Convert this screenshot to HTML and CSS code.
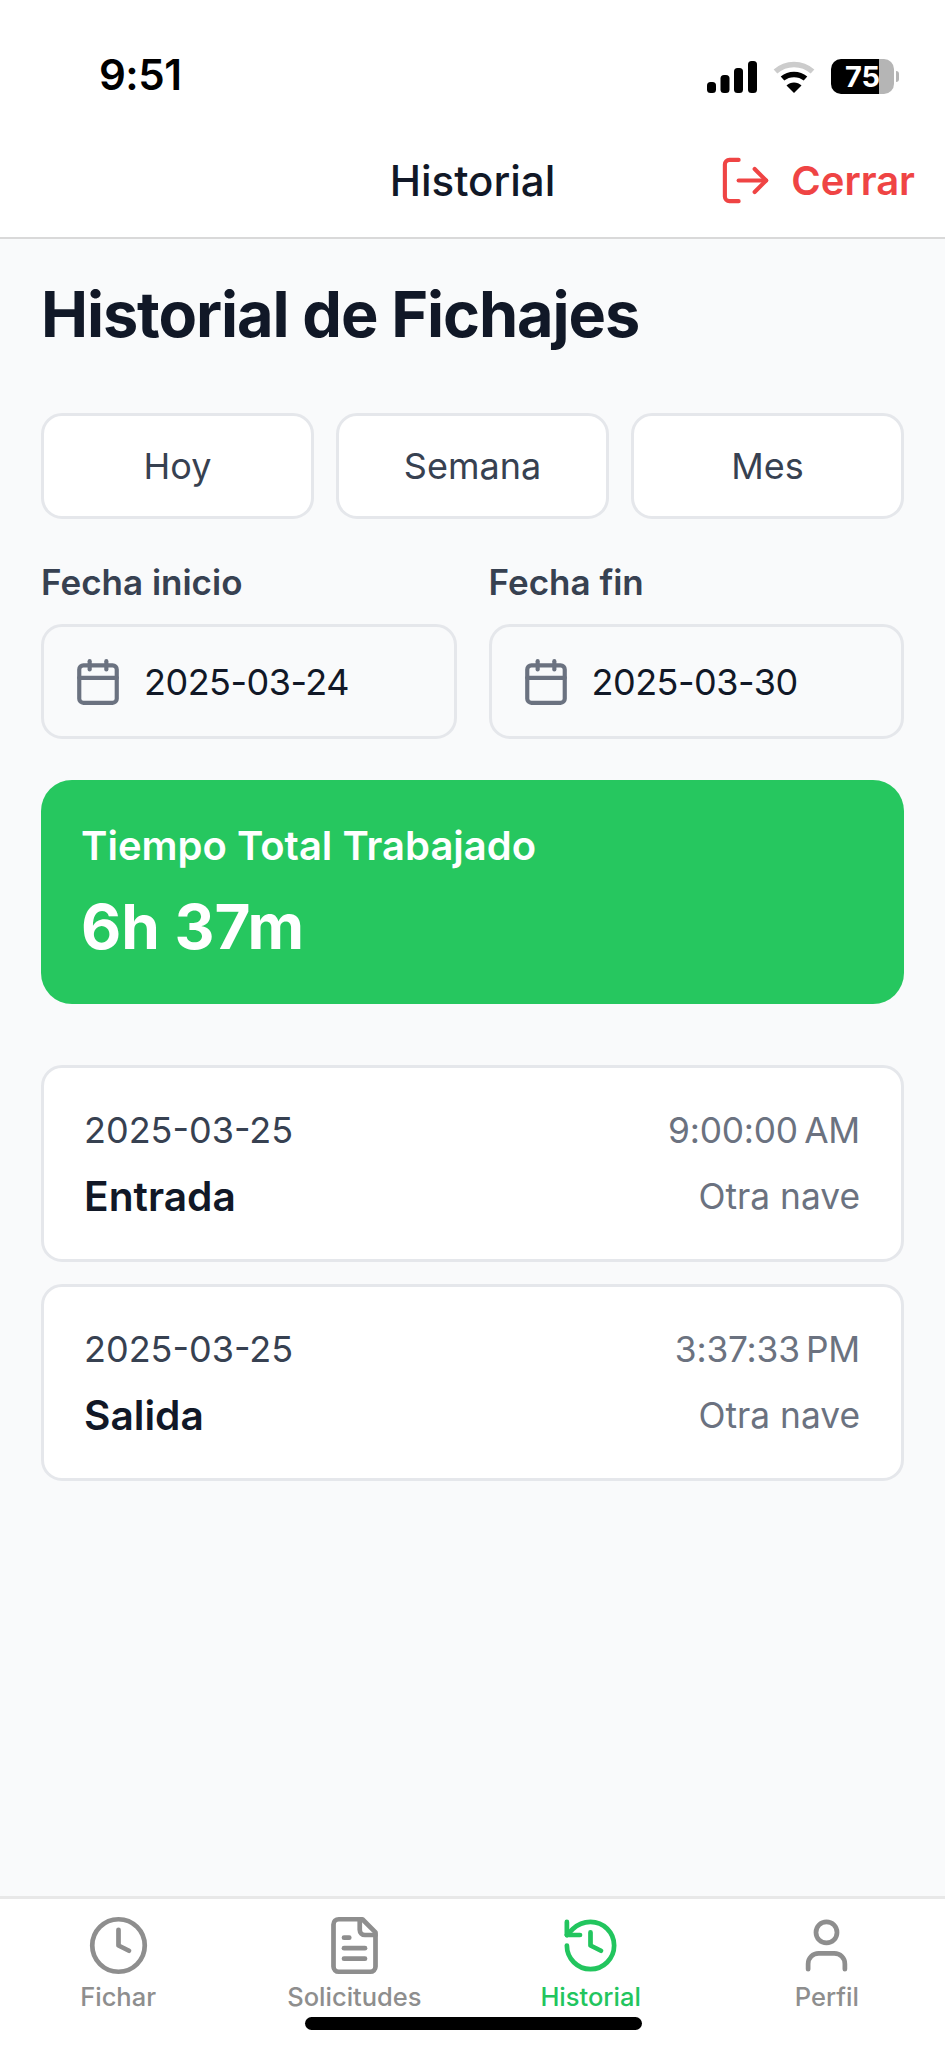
FILE: index.html
```html
<!DOCTYPE html>
<html lang="es">
<head>
  <meta charset="UTF-8" />
  <title>Historial</title>
  <link rel="stylesheet" href="styles.css">
</head>
<body>
  <div class="app">
    <div class="status-bar">
      <span class="status-time">9:51</span>
      <div class="status-icons">
        <svg class="signal" width="50" height="32" viewBox="0 0 50 32">
          <rect x="0" y="21" width="9" height="11" rx="3.5" />
          <rect x="13.5" y="14" width="9" height="18" rx="3.5" />
          <rect x="27" y="7" width="9" height="25" rx="3.5" />
          <rect x="41" y="0" width="9" height="32" rx="3.5" />
        </svg>
        <svg class="wifi" width="42" height="32" viewBox="0 0 42 32" fill="none">
          <path d="M2.5 10.5C13 1 29 1 39.500 10.500" stroke="#cccccc" stroke-width="5.500" />
          <path d="M9.500 17.500C16 12 26 12 32.500 17.500" stroke="#000" stroke-width="5.500" />
          <path d="M21 32L13.500 24.500C17.500 20.500 24.500 20.500 28.500 24.500Z" fill="#000" />
        </svg>
        <div class="battery">
          <div class="battery-body">75</div>
          <div class="battery-nub"></div>
        </div>
      </div>
    </div>

    <header class="top-bar">
      <h2 class="top-title">Historial</h2>
      <button class="logout">
        <svg width="55" height="55" viewBox="0 0 24 24" fill="none" stroke="#ef4444" stroke-width="1.800" stroke-linecap="round" stroke-linejoin="round">
          <path d="M9 21H5a2 2 0 0 1-2-2V5a2 2 0 0 1 2-2h4" />
          <polyline points="16 17 21 12 16 7" />
          <line x1="21" y1="12" x2="9" y2="12" />
        </svg>
        <span>Cerrar</span>
      </button>
    </header>

    <main class="content">
      <h1 class="page-title">Historial de Fichajes</h1>

      <div class="quick-filters">
        <button class="filter-btn">Hoy</button>
        <button class="filter-btn">Semana</button>
        <button class="filter-btn">Mes</button>
      </div>

      <div class="date-row">
        <div class="date-field">
          <label class="date-label">Fecha inicio</label>
          <div class="date-input">
            <svg width="50" height="50" viewBox="0 0 24 24" fill="none" stroke="#6b7280" stroke-width="2" stroke-linecap="round" stroke-linejoin="round">
              <path d="M8 2v4" /><path d="M16 2v4" />
              <rect x="3" y="4" width="18" height="18" rx="2" />
              <path d="M3 10h18" />
            </svg>
            <span>2025-03-24</span>
          </div>
        </div>
        <div class="date-field">
          <label class="date-label">Fecha fin</label>
          <div class="date-input">
            <svg width="50" height="50" viewBox="0 0 24 24" fill="none" stroke="#6b7280" stroke-width="2" stroke-linecap="round" stroke-linejoin="round">
              <path d="M8 2v4" /><path d="M16 2v4" />
              <rect x="3" y="4" width="18" height="18" rx="2" />
              <path d="M3 10h18" />
            </svg>
            <span>2025-03-30</span>
          </div>
        </div>
      </div>

      <section class="total-card">
        <div class="total-label">Tiempo Total Trabajado</div>
        <div class="total-value">6h 37m</div>
      </section>

      <ul class="records">
        <li class="record">
          <div class="record-left">
            <span class="record-date">2025-03-25</span>
            <span class="record-type">Entrada</span>
          </div>
          <div class="record-right">
            <span class="record-time">9:00:00&#8239;AM</span>
            <span class="record-place">Otra nave</span>
          </div>
        </li>
        <li class="record">
          <div class="record-left">
            <span class="record-date">2025-03-25</span>
            <span class="record-type">Salida</span>
          </div>
          <div class="record-right">
            <span class="record-time">3:37:33&#8239;PM</span>
            <span class="record-place">Otra nave</span>
          </div>
        </li>
      </ul>
    </main>

    <nav class="tab-bar">
      <a class="tab">
        <svg width="63" height="63" viewBox="0 0 24 24" fill="none" stroke="currentColor" stroke-width="1.800" stroke-linecap="round" stroke-linejoin="round">
          <circle cx="12" cy="12" r="10" />
          <polyline points="12 6 12 12 16 14" />
        </svg>
        <span>Fichar</span>
      </a>
      <a class="tab">
        <svg width="63" height="63" viewBox="0 0 24 24" fill="none" stroke="currentColor" stroke-width="1.800" stroke-linecap="round" stroke-linejoin="round">
          <path d="M15 2H6a2 2 0 0 0-2 2v16a2 2 0 0 0 2 2h12a2 2 0 0 0 2-2V7Z" />
          <path d="M14 2v4a2 2 0 0 0 2 2h4" />
          <path d="M10 9H8" /><path d="M16 13H8" /><path d="M16 17H8" />
        </svg>
        <span>Solicitudes</span>
      </a>
      <a class="tab active">
        <svg width="63" height="63" viewBox="0 0 24 24" fill="none" stroke="currentColor" stroke-width="1.800" stroke-linecap="round" stroke-linejoin="round">
          <path d="M3 12a9 9 0 1 0 9-9 9.75 9.75 0 0 0-6.74 2.74L3 8" />
          <path d="M3 3v5h5" />
          <path d="M12 7v5l4 2" />
        </svg>
        <span>Historial</span>
      </a>
      <a class="tab">
        <svg width="63" height="63" viewBox="0 0 24 24" fill="none" stroke="currentColor" stroke-width="1.800" stroke-linecap="round" stroke-linejoin="round">
          <path d="M19 21v-2a4 4 0 0 0-4-4H9a4 4 0 0 0-4 4v2" />
          <circle cx="12" cy="7" r="4" />
        </svg>
        <span>Perfil</span>
      </a>
      <div class="home-indicator"></div>
    </nav>
  </div>
</body>
</html>
```

FILE: styles.css
```css
* {
  box-sizing: border-box;
}

body {
  margin: 0;
  background: #fff;
  font-family: Inter, 'Noto Sans', sans-serif;
}

.app {
  width: 945px;
  height: 2048px;
  display: flex;
  flex-direction: column;
  overflow: hidden;
  background: #f9fafb;
}

/* status bar */
.status-bar {
  height: 110px;
  flex: none;
  background: #fff;
  display: flex;
  justify-content: space-between;
  align-items: flex-start;
  padding: 51px 46px 0 99px;
}

.status-time {
  font-size: 42px;
  font-weight: 600;
  line-height: 48px;
  letter-spacing: -0.5px;
  color: #000;
}

.status-icons {
  display: flex;
  align-items: center;
  gap: 16px;
  padding-top: 8px;
}

.battery {
  display: flex;
  align-items: center;
  gap: 2px;
}

.battery-body {
  width: 63px;
  height: 35px;
  border-radius: 10px;
  background: linear-gradient(90deg, #000 76%, #b5b5b5 76%);
  color: #fff;
  font-size: 29px;
  font-weight: 700;
  line-height: 35px;
  text-align: center;
}

.battery-nub {
  width: 3px;
  height: 11px;
  border-radius: 0 3px 3px 0;
  background: #b5b5b5;
}

/* top bar */
.top-bar {
  height: 129px;
  flex: none;
  background: #fff;
  border-bottom: 2px solid #d9d9d9;
  display: grid;
  grid-template-columns: 1fr auto 1fr;
  align-items: center;
  padding: 14px 30px 0;
}

.top-title {
  grid-column: 2;
  margin: 0;
  font-size: 42px;
  font-weight: 500;
  color: #111827;
}

.logout {
  justify-self: end;
  display: flex;
  align-items: center;
  gap: 18px;
  padding: 0;
  border: none;
  background: none;
  color: #ef4444;
  font-family: inherit;
  font-size: 40px;
  font-weight: 600;
}

/* content */
.content {
  flex: 1;
  padding: 36px 41px 0;
}

.page-title {
  margin: 0;
  font-size: 63px;
  font-weight: 700;
  line-height: 79px;
  letter-spacing: -1.100px;
  color: #111827;
}

.quick-filters {
  display: flex;
  gap: 22px;
  margin-top: 59px;
}

.filter-btn {
  flex: 1;
  height: 106px;
  background: #fff;
  border: 3px solid #e5e7eb;
  border-radius: 21px;
  color: #374151;
  font-family: inherit;
  font-size: 36px;
}

.date-row {
  display: flex;
  gap: 32px;
  margin-top: 43px;
}

.date-field {
  flex: 1;
}

.date-label {
  display: block;
  font-size: 35px;
  font-weight: 600;
  line-height: 40px;
  color: #374151;
  margin-bottom: 22px;
}

.date-input {
  height: 115px;
  border: 3px solid #e5e7eb;
  border-radius: 21px;
  display: flex;
  align-items: center;
  gap: 21px;
  padding-left: 29px;
  font-size: 36px;
  letter-spacing: -0.5px;
  color: #111827;
}

.total-card {
  margin-top: 41px;
  height: 224px;
  border-radius: 31px;
  background: #26c75f;
  color: #fff;
  padding: 43px 40px;
}

.total-label {
  font-size: 40px;
  font-weight: 600;
  line-height: 46px;
}

.total-value {
  margin-top: 20px;
  font-size: 62px;
  font-weight: 700;
  line-height: 76px;
}

.records {
  list-style: none;
  margin: 61px 0 0;
  padding: 0;
  display: flex;
  flex-direction: column;
  gap: 22px;
}

.record {
  height: 197px;
  background: #fff;
  border: 3px solid #e5e7eb;
  border-radius: 21px;
  display: flex;
  justify-content: space-between;
  align-items: center;
  padding: 0 41px 0 40px;
}

.record-left,
.record-right {
  display: flex;
  flex-direction: column;
  gap: 21px;
}

.record-right {
  align-items: flex-end;
}

.record-date,
.record-time,
.record-place,
.record-type {
  line-height: 45px;
}

.record-date {
  font-size: 36px;
  color: #374151;
}

.record-type {
  font-size: 40.700px;
  font-weight: 600;
  color: #111827;
}

.record-time,
.record-place {
  font-size: 35.300px;
  color: #6b7280;
}

.record-time {
  letter-spacing: -0.2px;
}

/* bottom tabs */
.tab-bar {
  height: 152px;
  flex: none;
  position: relative;
  background: #fff;
  border-top: 3px solid #e8e8e8;
  display: flex;
  padding-top: 15px;
}

.tab {
  flex: 1;
  display: flex;
  flex-direction: column;
  align-items: center;
  color: #8e8e8e;
  font-size: 25.500px;
  font-weight: 500;
}

.tab span {
  line-height: 32px;
  margin-top: 4px;
}

.tab.active {
  color: #22c55e;
}

.home-indicator {
  position: absolute;
  left: 305px;
  top: 118px;
  width: 337px;
  height: 13px;
  border-radius: 7px;
  background: #000;
}
```
